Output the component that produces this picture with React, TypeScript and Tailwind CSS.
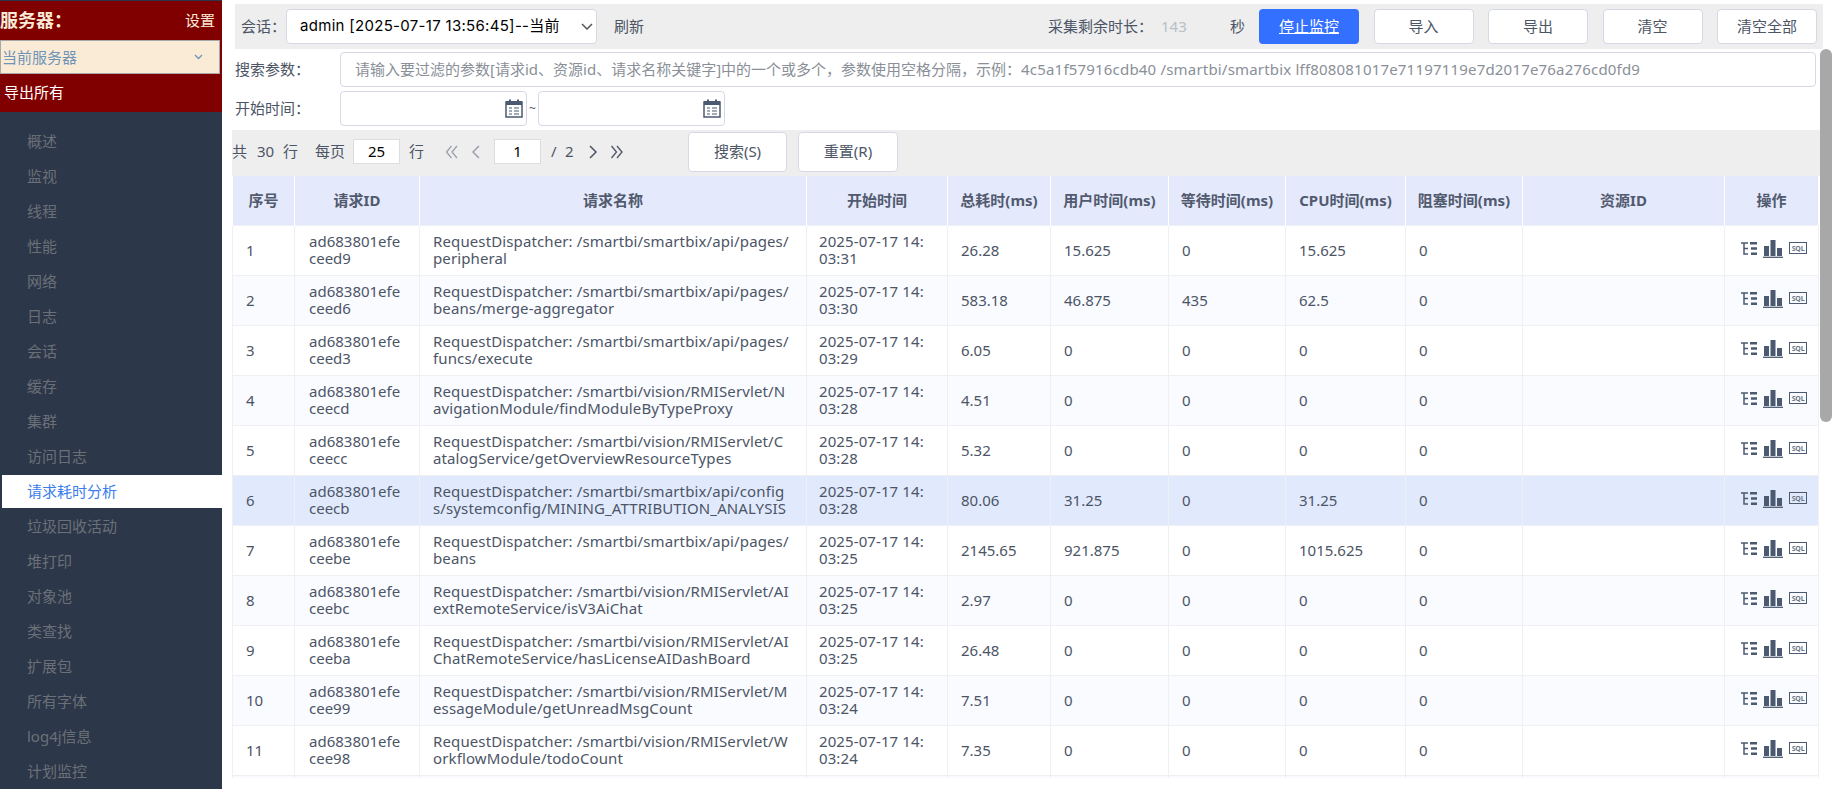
const menuItems = ['概述', '监视', '线程', '性能', '网络', '日志', '会话', '缓存', '集群', '访问日志', '请求耗时分析', '垃圾回收活动', '堆打印', '对象池', '类查找', '扩展包', '所有字体', 'log4j信息', '计划监控'];

const rows = [
  ['1', 'ad683801efeceed9', 'RequestDispatcher: /smartbi/smartbix/api/pages/peripheral', '2025-07-17 14:03:31', '26.28', '15.625', '0', '15.625', '0'],
  ['2', 'ad683801efeceed6', 'RequestDispatcher: /smartbi/smartbix/api/pages/beans/merge-aggregator', '2025-07-17 14:03:30', '583.18', '46.875', '435', '62.5', '0'],
  ['3', 'ad683801efeceed3', 'RequestDispatcher: /smartbi/smartbix/api/pages/funcs/execute', '2025-07-17 14:03:29', '6.05', '0', '0', '0', '0'],
  ['4', 'ad683801efeceecd', 'RequestDispatcher: /smartbi/vision/RMIServlet/NavigationModule/findModuleByTypeProxy', '2025-07-17 14:03:28', '4.51', '0', '0', '0', '0'],
  ['5', 'ad683801efeceecc', 'RequestDispatcher: /smartbi/vision/RMIServlet/CatalogService/getOverviewResourceTypes', '2025-07-17 14:03:28', '5.32', '0', '0', '0', '0'],
  ['6', 'ad683801efeceecb', 'RequestDispatcher: /smartbi/smartbix/api/configs/systemconfig/MINING_ATTRIBUTION_ANALYSIS', '2025-07-17 14:03:28', '80.06', '31.25', '0', '31.25', '0'],
  ['7', 'ad683801efeceebe', 'RequestDispatcher: /smartbi/smartbix/api/pages/beans', '2025-07-17 14:03:25', '2145.65', '921.875', '0', '1015.625', '0'],
  ['8', 'ad683801efeceebc', 'RequestDispatcher: /smartbi/vision/RMIServlet/AIextRemoteService/isV3AiChat', '2025-07-17 14:03:25', '2.97', '0', '0', '0', '0'],
  ['9', 'ad683801efeceeba', 'RequestDispatcher: /smartbi/vision/RMIServlet/AIChatRemoteService/hasLicenseAIDashBoard', '2025-07-17 14:03:25', '26.48', '0', '0', '0', '0'],
  ['10', 'ad683801efecee99', 'RequestDispatcher: /smartbi/vision/RMIServlet/MessageModule/getUnreadMsgCount', '2025-07-17 14:03:24', '7.51', '0', '0', '0', '0'],
  ['11', 'ad683801efecee98', 'RequestDispatcher: /smartbi/vision/RMIServlet/WorkflowModule/todoCount', '2025-07-17 14:03:24', '7.35', '0', '0', '0', '0'],
];

const headers = ['序号', '请求ID', '请求名称', '开始时间', '总耗时(ms)', '用户时间(ms)', '等待时间(ms)', 'CPU时间(ms)', '阻塞时间(ms)', '资源ID', '操作'];
const colWidths = [62, 125, 387, 141, 103, 118, 117, 120, 117, 202, 94];

function CalendarIcon() {
  return (
    <svg width="18" height="19" viewBox="0 0 18 19" className="shrink-0">
      <path d="M1 3h16v15H1z" fill="none" stroke="#4b5a70" strokeWidth="1.5" />
      <path d="M1 2h16v4H1z" fill="#4b5a70" />
      <path d="M4 0.5h2v3H4zM12 0.5h2v3h-2z" fill="#4b5a70" />
      <path d="M4 9h3M9 9h5M4 12h3M9 12h5M4 15h3M9 15h5" stroke="#4b5a70" strokeWidth="1.2" />
    </svg>
  );
}

function TreeIcon() {
  return (
    <svg width="16" height="13" viewBox="0 0 16 13">
      <path d="M0 1h7M3 1v11h4M3 6.5h4" fill="none" stroke="#4b5a70" strokeWidth="1.5" />
      <path d="M9 0h7v2.4H9zM10 5.3h6v2.4h-6zM10 10.6h6v2.4h-6z" fill="#4b5a70" />
    </svg>
  );
}

function BarsIcon() {
  return (
    <svg width="20" height="19" viewBox="0 0 20 19">
      <path d="M1 7h5v10H1zM7.5 1h5v16h-5zM14 9h5v8h-5z" fill="#4b5a70" />
      <path d="M0 18.3h20" stroke="#4b5a70" strokeWidth="1.3" />
    </svg>
  );
}

function SqlIcon() {
  return (
    <span className="flex items-center justify-center w-[18px] h-[12px] border border-[#4b5a70] text-[7px] leading-none font-bold text-[#6b7688] tracking-[-0.2px]">
      SQL
    </span>
  );
}

function DoubleChevron({ dir, color }: { dir: 'left' | 'right'; color: string }) {
  const d = dir === 'left' ? 'M6.5 1L1.5 7l5 6M12 1L7 7l5 6' : 'M1.5 1l5 6-5 6M7 1l5 6-5 6';
  return (
    <svg width="14" height="14" viewBox="0 0 14 14">
      <path d={d} fill="none" stroke={color} strokeWidth="1.3" />
    </svg>
  );
}

function ToolButton({ label, primary }: { label: string; primary?: boolean }) {
  return (
    <button
      className={
        primary
          ? 'w-[100px] h-[35px] rounded bg-[#3370ff] text-white underline'
          : 'w-[100px] h-[35px] rounded bg-white border border-[#d5d9e6] text-[#4c5566]'
      }
    >
      {label}
    </button>
  );
}

function cellClass(col: number) {
  if (col === 1) return 'pl-[14px] pr-[13px] border border-[#eff0f4] leading-[17px] break-all';
  if (col === 2) return 'pl-[13px] pr-[16px] tracking-[0.12px] border border-[#eff0f4] leading-[17px] break-all';
  if (col === 3) return 'pl-[12px] pr-[22px] tracking-[0.1px] border border-[#eff0f4] leading-[17px] break-all';
  return 'pl-[13px] pr-[14px] border border-[#eff0f4] leading-[17px] break-all';
}

export default function App() {
  return (
    <div className="flex h-[789px] w-[1841px] overflow-hidden bg-white font-['Noto_Sans','Noto_Sans_CJK_SC',sans-serif] text-[15px] text-[#4c5566]">
      <aside className="flex flex-col w-[222px] shrink-0 pt-px bg-[#2c3749]">
        <div className="h-[113px] bg-[#800000]">
          <div className="flex items-center justify-between h-[39px] pr-[7px]">
            <span className="text-[#faebd7] text-[18px] font-bold">服务器&#xFF1A;</span>
            <span className="text-[#faebd7]">设置</span>
          </div>
          <div className="flex items-center justify-between h-[34px] w-[220px] pl-px pr-4 bg-[#faebd7] border border-[#a8a8a8] text-[#6f94b8]">
            当前服务器
            <svg width="9" height="6" viewBox="0 0 9 6"><path d="M1 1l3.5 3.5L8 1" fill="none" stroke="#6f94b8" strokeWidth="1.3" /></svg>
          </div>
          <div className="pl-1 pt-[7px] text-white">导出所有</div>
        </div>
        <nav className="flex flex-col pt-[12px] pl-[2px]">
          {menuItems.map((item) => (
            <div
              key={item}
              className={
                item === '请求耗时分析'
                  ? 'flex items-center h-[33px] my-px pl-[25px] bg-white text-[#3b7ded]'
                  : 'flex items-center h-[33px] my-px pl-[25px] text-[#6b7078]'
              }
            >
              {item}
            </div>
          ))}
        </nav>
      </aside>

      <main className="relative flex-1 min-w-0 pl-[10px] pt-[4px]">
        <div className="flex items-center w-[1588px] h-[45px] ml-[3px] pl-[6px] pr-[6px] bg-[#eeeeee]">
          <span className="w-[45px] shrink-0 whitespace-nowrap">会话&#xFF1A;</span>
          <div className="flex items-center justify-between w-[311px] h-[35px] pl-[13px] pr-[3px] bg-white border border-[#d5d9e6] rounded text-black whitespace-nowrap tracking-[0.3px] font-['Inter','Noto_Sans_CJK_SC',sans-serif]">
            admin [2025-07-17 13:56:45]--当前
            <svg width="12" height="7" viewBox="0 0 12 7"><path d="M1 1l5 5 5-5" fill="none" stroke="#555" strokeWidth="1.5" /></svg>
          </div>
          <span className="ml-[17px]">刷新</span>
          <span className="ml-auto w-[113px] whitespace-nowrap">采集剩余时长&#xFF1A;</span>
          <span className="w-[69px] text-[#b8bfc8]">143</span>
          <span className="w-[29px]">秒</span>
          <div className="flex gap-[14.5px]">
            <ToolButton label="停止监控" primary />
            <ToolButton label="导入" />
            <ToolButton label="导出" />
            <ToolButton label="清空" />
            <ToolButton label="清空全部" />
          </div>
        </div>

        <div className="flex items-center mt-[3px] ml-[3px]">
          <span className="w-[105px] shrink-0 whitespace-nowrap">搜索参数&#xFF1A;</span>
          <div className="flex items-center w-[1476px] h-[35px] pl-[14px] bg-white border border-[#d5d9e6] rounded text-[#8a8f98] whitespace-nowrap">
            <span>请输入要过滤的参数[请求id、资源id、请求名称关键字]中的一个或多个&#xFF0C;参数使用空格分隔&#xFF0C;示例&#xFF1A;</span>
            <span className="tracking-[0.19px]">4c5a1f57916cdb40 /smartbi/smartbix lff808081017e71197119e7d2017e76a276cd0fd9</span>
          </div>
        </div>

        <div className="flex items-center mt-[4px] ml-[3px]">
          <span className="w-[105px] shrink-0 whitespace-nowrap">开始时间&#xFF1A;</span>
          <div className="flex items-center justify-end w-[187px] h-[35px] pr-[3px] bg-white border border-[#d5d9e6] rounded">
            <CalendarIcon />
          </div>
          <span className="w-[11px] text-center text-xs">~</span>
          <div className="flex items-center justify-end w-[187px] h-[35px] pr-[3px] bg-white border border-[#d5d9e6] rounded">
            <CalendarIcon />
          </div>
        </div>

        <div className="flex items-center w-[1588px] h-[46px] mt-[4px] pb-[3px] bg-[#eeeeee]">
          <span className="w-[25px]">共</span>
          <span className="w-[26px]">30</span>
          <span className="w-[32px]">行</span>
          <span className="w-[38px] whitespace-nowrap">每页</span>
          <div className="flex items-center justify-center w-[47px] h-[25px] bg-white border border-[#dddddd] text-black">25</div>
          <span className="ml-[9px] w-[36px]">行</span>
          <div className="w-[26px]"><DoubleChevron dir="left" color="#9aa1ab" /></div>
          <svg width="10" height="14" viewBox="0 0 10 14" className="mr-[13px]"><path d="M8 1L2 7l6 6" fill="none" stroke="#9aa1ab" strokeWidth="1.5" /></svg>
          <div className="flex items-center justify-center w-[47px] h-[25px] bg-white border border-[#dddddd] text-black">1</div>
          <span className="ml-[10px] w-[14px]">/</span>
          <span className="w-[23px]">2</span>
          <svg width="10" height="14" viewBox="0 0 10 14" className="mr-[12px]"><path d="M2 1l6 6-6 6" fill="none" stroke="#4c5566" strokeWidth="1.5" /></svg>
          <div className="w-[34px]"><DoubleChevron dir="right" color="#4c5566" /></div>
          <button className="w-[99px] h-[40px] ml-[44px] bg-white border border-[#d5d9e6] rounded">搜索(S)</button>
          <button className="w-[100px] h-[40px] ml-[11px] bg-white border border-[#d5d9e6] rounded">重置(R)</button>
        </div>

        <div className="w-[1587px] h-[602px] overflow-hidden">
          <table className="table-fixed w-[1586px] border-collapse">
            <colgroup>
              {colWidths.map((w, i) => (
                <col key={i} style={{ width: w }} />
              ))}
            </colgroup>
            <thead>
              <tr className="h-[49px] bg-[#e4e9fc]">
                {headers.map((h) => (
                  <th key={h} className="px-0 border-x border-white text-center font-bold text-[#515a6e]">
                    {h}
                  </th>
                ))}
              </tr>
            </thead>
            <tbody>
              {rows.map((row, i) => (
                <tr
                  key={row[0]}
                  className={i === 5 ? 'h-[50px] bg-[#e1eafd]' : i % 2 === 1 ? 'h-[50px] bg-[#fafbff]' : 'h-[50px] bg-white'}
                >
                  {row.map((cell, j) => (
                    <td key={j} className={cellClass(j)}>
                      {cell}
                    </td>
                  ))}
                  <td className="border border-[#eff0f4]" />
                  <td className="border border-[#eff0f4]">
                    <div className="flex items-center gap-[6px] pl-[16px] pb-1">
                      <TreeIcon />
                      <BarsIcon />
                      <SqlIcon />
                    </div>
                  </td>
                </tr>
              ))}
              <tr className="h-[50px] bg-[#fafbff]">
                {headers.map((h) => (
                  <td key={h} className="border border-[#eff0f4]" />
                ))}
              </tr>
            </tbody>
          </table>
        </div>

        {/* scrollbar thumb sits over the page */}
        <div className="absolute top-[49px] left-[1598px] w-[12px] h-[373px] rounded-md bg-[#a8a8a8]" />
      </main>
    </div>
  );
}
